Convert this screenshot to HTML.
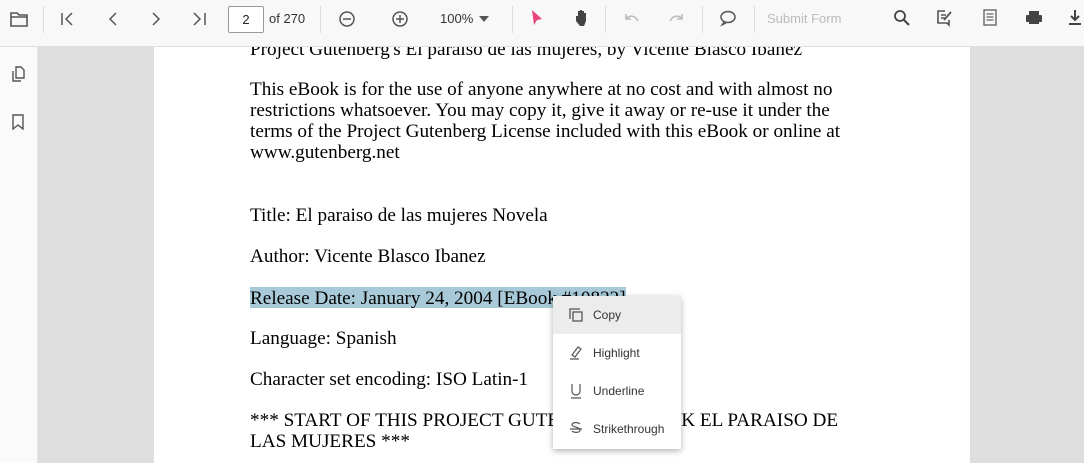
<!DOCTYPE html>
<html><head><style>
*{margin:0;padding:0;box-sizing:border-box}
body{width:1084px;height:463px;overflow:hidden;background:#dedede;font-family:"Liberation Sans",sans-serif;position:relative}
.tb{position:absolute;left:0;top:0;width:1084px;height:47px;background:#f8f8f8;border-bottom:1px solid #e0e0e0}
.side{position:absolute;left:0;top:47px;width:38px;height:416px;background:#fafafa;border-right:1px solid #e6e6e6}
.page{position:absolute;left:154px;top:47px;width:816px;height:416px;background:#fff;overflow:hidden}
.t{position:absolute;left:96px;font-family:"Liberation Serif",serif;font-size:19.2px;color:#000;line-height:21px;white-space:nowrap}
.ic{position:absolute}
.sep{position:absolute;top:6px;width:1px;height:27px;background:#ddd}
.menu{position:absolute;left:553px;top:296px;width:128px;height:153px;background:#fff;box-shadow:0 2px 6px rgba(0,0,0,.3);font-size:12px;color:#333}
.mi{position:absolute;left:0;width:128px;height:38px;line-height:38px;padding-left:40px}
</style></head><body>
<div class="tb">
<svg class="ic" style="left:10px;top:11px" width="18" height="16" viewBox="0 0 18 16"><path d="M1 2h6l2 2h8v11H1z M1 6h16" fill="none" stroke="#555" stroke-width="1.6"/></svg>
<div class="sep" style="left:43px"></div>
<svg class="ic" style="left:60px;top:12px" width="16" height="14"><path d="M2 1v12M12 1L6 7l6 6" fill="none" stroke="#555" stroke-width="1.5"/></svg>
<svg class="ic" style="left:106px;top:12px" width="14" height="14"><path d="M10 1L4 7l6 6" fill="none" stroke="#555" stroke-width="1.5"/></svg>
<svg class="ic" style="left:149px;top:12px" width="14" height="14"><path d="M4 1l6 6-6 6" fill="none" stroke="#555" stroke-width="1.5"/></svg>
<svg class="ic" style="left:192px;top:12px" width="16" height="14"><path d="M2 1l6 6-6 6M13 1v12" fill="none" stroke="#555" stroke-width="1.5"/></svg>
<div style="position:absolute;left:228px;top:6px;width:36px;height:27px;border:1px solid #999;border-radius:2px;background:#fff;font-size:13px;text-align:center;line-height:25px;color:#222">2</div>
<div style="position:absolute;left:269px;top:11px;font-size:13px;color:#333">of 270</div>
<div class="sep" style="left:320px"></div>
<svg class="ic" style="left:338px;top:10px" width="18" height="18"><circle cx="9" cy="9" r="7" fill="none" stroke="#555" stroke-width="1.5"/><path d="M5 9h8" stroke="#555" stroke-width="1.5"/></svg>
<svg class="ic" style="left:391px;top:10px" width="18" height="18"><circle cx="9" cy="9" r="7" fill="none" stroke="#555" stroke-width="1.5"/><path d="M5 9h8M9 5v8" stroke="#555" stroke-width="1.5"/></svg>
<div style="position:absolute;left:440px;top:11px;font-size:13px;color:#333">100%</div>
<svg class="ic" style="left:478px;top:15px" width="12" height="8"><path d="M1 1h10L6 7z" fill="#555"/></svg>
<div class="sep" style="left:512px"></div>
<svg class="ic" style="left:530px;top:9px" width="14" height="18"><path d="M2 1l10 9-5 1-3 5z" fill="#e8457a"/></svg>
<svg class="ic" style="left:573px;top:9px" width="18" height="18"><path d="M3 9v-2l2 0 0-5h2v5V1h2v6V2h2v5V4h2v8l-2 5H7L3 12z" fill="#444"/></svg>
<div class="sep" style="left:605px"></div>
<svg class="ic" style="left:623px;top:12px" width="18" height="12"><path d="M3 2v5h5M3 7c3-4 9-4 12 2" fill="none" stroke="#bbb" stroke-width="1.6"/></svg>
<svg class="ic" style="left:667px;top:12px" width="18" height="12"><path d="M15 2v5h-5M15 7c-3-4-9-4-12 2" fill="none" stroke="#bbb" stroke-width="1.6"/></svg>
<div class="sep" style="left:702px"></div>
<svg class="ic" style="left:719px;top:10px" width="18" height="17"><ellipse cx="9" cy="7" rx="7" ry="5.5" fill="none" stroke="#555" stroke-width="1.5"/><path d="M5 12l-2 3 4-2" fill="none" stroke="#555" stroke-width="1.3"/></svg>
<div class="sep" style="left:754px"></div>
<div style="position:absolute;left:767px;top:11px;font-size:13px;color:#bbb">Submit Form</div>
<svg class="ic" style="left:893px;top:9px" width="18" height="18"><circle cx="7" cy="7" r="5" fill="none" stroke="#444" stroke-width="1.8"/><path d="M11 11l5 5" stroke="#444" stroke-width="2"/></svg>
<svg class="ic" style="left:936px;top:9px" width="18" height="18"><path d="M9 2H2v12h9l2 2v-5M5 6h5M5 9h4" fill="none" stroke="#555" stroke-width="1.6"/><path d="M8 11l7-8" stroke="#555" stroke-width="1.8"/></svg>
<svg class="ic" style="left:983px;top:9px" width="14" height="18"><rect x="1" y="1" width="12" height="15" fill="none" stroke="#666" stroke-width="1.4"/><path d="M3.5 5h7M3.5 8h7M3.5 11h7" stroke="#666" stroke-width="1.2"/></svg>
<svg class="ic" style="left:1025px;top:10px" width="18" height="16"><rect x="4" y="1" width="10" height="4" fill="#444"/><rect x="1" y="5" width="16" height="7" rx="1" fill="#444"/><rect x="4" y="10" width="10" height="4" fill="#444"/></svg>
<svg class="ic" style="left:1068px;top:9px" width="16" height="18"><path d="M7 1v10M3 7l4 4 4-4M1 15h12" fill="none" stroke="#444" stroke-width="2"/></svg>
</div>
<div class="side">
<svg class="ic" style="left:11px;top:19px" width="14" height="16"><path d="M5 1h5l3 3v8H5zM2 5v10h8" fill="none" stroke="#555" stroke-width="1.4"/></svg>
<svg class="ic" style="left:12px;top:67px" width="12" height="16"><path d="M1 1h10v14l-5-4-5 4z" fill="none" stroke="#555" stroke-width="1.4"/></svg>
</div>
<div class="page">
<div class="t" style="top:-8px">Project Gutenberg's El paraiso de las mujeres, by Vicente Blasco Ibanez</div>
<div class="t" style="top:32px">This eBook is for the use of anyone anywhere at no cost and with almost no<br>restrictions whatsoever. You may copy it, give it away or re-use it under the<br>terms of the Project Gutenberg License included with this eBook or online at<br>www.gutenberg.net</div>
<div class="t" style="top:158px">Title: El paraiso de las mujeres Novela</div>
<div class="t" style="top:199px">Author: Vicente Blasco Ibanez</div>
<div style="position:absolute;left:96px;top:240px;width:376px;height:21px;background:#a8cad8"></div>
<div class="t" style="top:241px">Release Date: January 24, 2004 [EBook #10822]</div>
<div class="t" style="top:281px">Language: Spanish</div>
<div class="t" style="top:322px">Character set encoding: ISO Latin-1</div>
<div class="t" style="top:363px">*** START OF THIS PROJECT GUTENBERG EBOOK EL PARAISO DE<br>LAS MUJERES ***</div>
</div>
<div class="menu">
<div class="mi" style="top:0;background:#ececec">Copy</div>
<div class="mi" style="top:38px">Highlight</div>
<div class="mi" style="top:76px">Underline</div>
<div class="mi" style="top:114px">Strikethrough</div>
<svg class="ic" style="left:15px;top:11px" width="16" height="16"><path d="M2 12V2h10" fill="none" stroke="#555" stroke-width="1.3"/><rect x="5" y="5" width="9" height="9" fill="none" stroke="#555" stroke-width="1.3"/></svg>
<svg class="ic" style="left:15px;top:49px" width="16" height="16"><path d="M4 10l6-8 3 2-6 8zM2 14h9" fill="none" stroke="#555" stroke-width="1.2"/></svg>
<svg class="ic" style="left:15px;top:87px" width="16" height="16"><path d="M4 1v7a4 4 0 008 0V1M3 15h10" fill="none" stroke="#555" stroke-width="1.2"/></svg>
<svg class="ic" style="left:15px;top:125px" width="16" height="16"><path d="M12 3c-2-2-8-2-8 1 0 2 8 2 8 5 0 3-6 3-8 1M2 8h12" fill="none" stroke="#555" stroke-width="1.2"/></svg>
</div>
</body></html>
